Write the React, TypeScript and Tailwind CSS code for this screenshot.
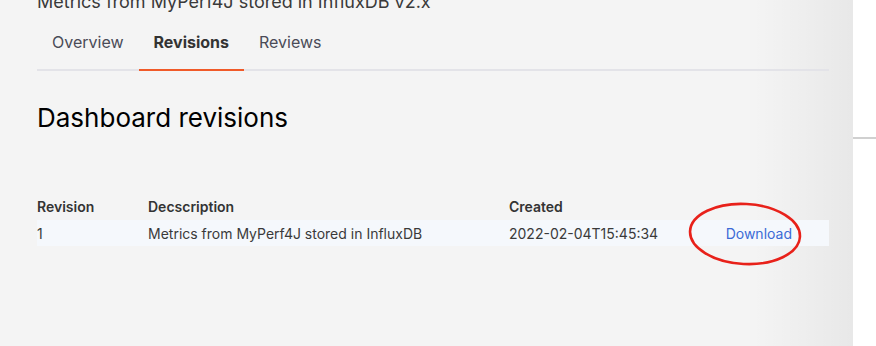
import React from "react";

export default function App() {
  return (
    <div
      className="flex w-[876px] h-[346px] overflow-hidden bg-white"
      style={{ fontFamily: "Inter, 'Noto Sans', sans-serif" }}
    >
      <div className="relative w-[853px] h-full bg-[#f4f4f4] pl-[37px] pr-[24px]">
        <div className="pointer-events-none absolute right-0 top-0 h-full w-[100px] bg-gradient-to-r from-transparent to-black/[0.05]" />
        <div className="relative">
          <div className="-mt-[12px] h-[27px] text-[18px] leading-[28px] text-[#3a3a3a] whitespace-nowrap">
            Metrics from MyPerf4J stored in InfluxDB v2.x
          </div>
          <div className="flex border-b-2 border-[#e3e3e8]">
            <div className="px-[15px] pt-[15px] pb-[15px] text-[16px] leading-[24px] text-[#4a4b57]">
              Overview
            </div>
            <div className="-mb-[2px] border-b-2 border-[#f05a28] px-[15px] pt-[15px] pb-[15px] text-[16px] leading-[24px] font-bold text-[#333]">
              Revisions
            </div>
            <div className="px-[15px] pt-[15px] pb-[15px] text-[16px] leading-[24px] text-[#4a4b57]">
              Reviews
            </div>
          </div>
          <h1 className="mt-[30px] text-[26px] leading-[34px] text-black">
            Dashboard revisions
          </h1>
          <div className="mt-[59px] text-[14px] text-[#333]">
            <div className="grid h-[24px] grid-cols-[111px_361px_1fr_auto] items-center font-semibold">
              <div>Revision</div>
              <div>Decscription</div>
              <div>Created</div>
              <div className="w-[140px]" />
            </div>
            <div className="mt-[2px] grid h-[26px] grid-cols-[111px_361px_1fr_auto] items-center bg-[#f5f8fc] text-[#3a3a3a]">
              <div>1</div>
              <div>Metrics from MyPerf4J stored in InfluxDB</div>
              <div>2022-02-04T15:45:34</div>
              <div className="w-[140px] pr-[37px] text-right text-[#3b6bd6]">Download</div>
            </div>
          </div>
        </div>
        <svg
          className="pointer-events-none absolute left-[687px] top-[202px]"
          width="118"
          height="66"
          viewBox="0 0 118 66"
        >
          <ellipse
            cx="58"
            cy="32"
            rx="55"
            ry="30"
            fill="none"
            stroke="#e8211a"
            strokeWidth="2.6"
            transform="rotate(3 58 32)"
          />
        </svg>
      </div>
      <div className="w-[23px] h-full bg-white">
        <div className="mt-[137px] h-[2px] bg-[#d0d0d0]" />
      </div>
    </div>
  );
}
